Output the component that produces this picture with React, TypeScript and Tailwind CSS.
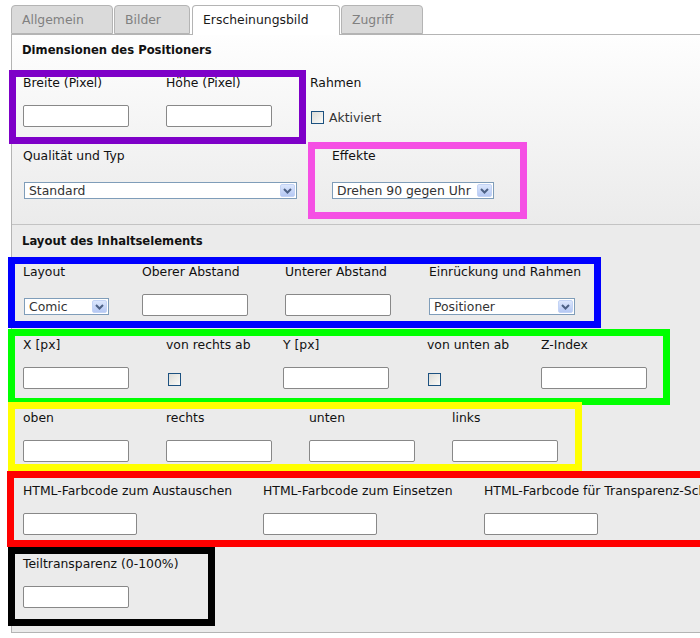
import React from "react";

function Label({ children }: { children: React.ReactNode }) {
  return <div className="h-[15px] whitespace-nowrap leading-[15px] text-[#111]">{children}</div>;
}

function TextInput({ className }: { className: string }) {
  return <div className={"h-[22px] rounded-[2px] border border-[#888] bg-white " + className} />;
}

function Select({ className, value }: { className: string; value: string }) {
  return (
    <div
      className={
        "mt-[4px] flex h-[17px] items-center justify-between border border-[#7f9db9] bg-white pl-[4px] pr-[1px] text-[#333] " +
        className
      }
    >
      <span className="leading-[15px] whitespace-nowrap">{value}</span>
      <span className="flex h-[13px] w-[15px] items-center justify-center rounded-[2px] border border-[#c3d3f5] bg-linear-to-b from-[#dce7fd] to-[#b5c8f3]">
        <svg width="9" height="6" viewBox="0 0 9 6">
          <path d="M1 1 L4.5 4.5 L8 1" fill="none" stroke="#4d6185" strokeWidth="2" />
        </svg>
      </span>
    </div>
  );
}

function Checkbox({ className }: { className: string }) {
  return (
    <div
      className={
        "h-[13px] w-[13px] border border-[#1c5180] bg-linear-to-br from-[#dcdcd7] to-[#fbfbf9] " + className
      }
    />
  );
}

function Field({
  className,
  label,
  children,
}: {
  className: string;
  label: string;
  children: React.ReactNode;
}) {
  return (
    <div className={"flex shrink-0 flex-col " + className}>
      <Label>{label}</Label>
      <div className="mt-[15px] h-[22px]">{children}</div>
    </div>
  );
}

function Tab({ label, active, className }: { label: string; active?: boolean; className: string }) {
  return (
    <div
      className={
        "relative flex shrink-0 items-start rounded-t-[4px] border border-[#b4b4b4] px-[10px] pt-[6px] leading-[15px] " +
        (active ? "z-10 -mb-[1px] h-[30px] border-b-0 bg-white text-[#1a1a1a] " : "h-[29px] bg-[#dadada] text-[#808080] ") +
        className
      }
    >
      {label}
    </div>
  );
}

export default function App() {
  return (
    <div className="relative h-[638px] w-[700px] overflow-hidden bg-white font-['DejaVu_Sans',sans-serif] text-[12.4px]">
      {/* Tabs */}
      <div className="flex items-end pl-[11px] pt-[5px]">
        <Tab label="Allgemein" className="w-[102px]" />
        <Tab label="Bilder" className="ml-[1px] w-[76px]" />
        <Tab label="Erscheinungsbild" active className="ml-[2px] w-[148px]" />
        <Tab label="Zugriff" className="ml-[1px] w-[82px]" />
      </div>

      {/* Panel */}
      <div className="ml-[11px] w-[700px] border-b border-l border-t border-[#b4b4b4]">
        {/* Section 1 */}
        <div className="border-b border-[#c3c3c3] bg-linear-to-b from-[#fefefe] to-[#ebebeb] pb-[24px] pl-[11px] pt-[8px]">
          <div className="-ml-[1px] h-[15px] text-[11.6px] font-bold leading-[15px] text-[#111]">Dimensionen des Positioners</div>
          <div className="mt-[17px] flex">
            <Field className="w-[143px]" label="Breite (Pixel)">
              <TextInput className="w-[106px]" />
            </Field>
            <Field className="w-[144px]" label="Höhe (Pixel)">
              <TextInput className="w-[106px]" />
            </Field>
            <Field className="w-[150px]" label="Rahmen">
              <div className="ml-[1px] mt-[6px] flex items-center">
                <Checkbox className="" />
                <span className="ml-[5px] leading-[13px] text-[#333]">Aktiviert</span>
              </div>
            </Field>
          </div>
          <div className="mt-[21px] flex">
            <Field className="w-[309px]" label="Qualität und Typ">
              <Select className="ml-[1px] w-[273px]" value="Standard" />
            </Field>
            <Field className="w-[200px]" label="Effekte">
              <Select className="w-[162px]" value="Drehen 90 gegen Uhr" />
            </Field>
          </div>
        </div>

        {/* Section 2 */}
        <div className="bg-[#ebebeb] pb-[24px] pl-[11px] pt-[9px]">
          <div className="-ml-[1px] h-[15px] text-[11.6px] font-bold leading-[15px] text-[#111]">Layout des Inhaltselements</div>
          <div className="mt-[15px] flex">
            <Field className="w-[119px]" label="Layout">
              <Select className="ml-[1px] w-[85px]" value="Comic" />
            </Field>
            <Field className="w-[143px]" label="Oberer Abstand">
              <TextInput className="w-[106px]" />
            </Field>
            <Field className="w-[144px]" label="Unterer Abstand">
              <TextInput className="w-[106px]" />
            </Field>
            <Field className="w-[160px]" label="Einrückung und Rahmen">
              <Select className="w-[146px]" value="Positioner" />
            </Field>
          </div>
          <div className="mt-[21px] flex">
            <Field className="w-[143px]" label="X [px]">
              <TextInput className="w-[106px]" />
            </Field>
            <Field className="w-[117px]" label="von rechts ab">
              <Checkbox className="ml-[2px] mt-[6px]" />
            </Field>
            <Field className="w-[144px]" label="Y [px]">
              <TextInput className="w-[106px]" />
            </Field>
            <Field className="w-[114px]" label="von unten ab">
              <Checkbox className="ml-[1px] mt-[6px]" />
            </Field>
            <Field className="w-[120px]" label="Z-Index">
              <TextInput className="w-[106px]" />
            </Field>
          </div>
          <div className="mt-[21px] flex">
            <Field className="w-[143px]" label="oben">
              <TextInput className="w-[106px]" />
            </Field>
            <Field className="w-[143px]" label="rechts">
              <TextInput className="w-[106px]" />
            </Field>
            <Field className="w-[143px]" label="unten">
              <TextInput className="w-[106px]" />
            </Field>
            <Field className="w-[143px]" label="links">
              <TextInput className="w-[106px]" />
            </Field>
          </div>
          <div className="mt-[21px] flex">
            <Field className="w-[240px]" label="HTML-Farbcode zum Austauschen">
              <TextInput className="w-[114px]" />
            </Field>
            <Field className="w-[221px]" label="HTML-Farbcode zum Einsetzen">
              <TextInput className="w-[114px]" />
            </Field>
            <Field className="w-[300px]" label="HTML-Farbcode für Transparenz-Schwellwert">
              <TextInput className="w-[114px]" />
            </Field>
          </div>
          <div className="mt-[21px] flex">
            <Field className="w-[143px]" label="Teiltransparenz (0-100%)">
              <TextInput className="w-[106px]" />
            </Field>
          </div>
        </div>
      </div>

      {/* Annotation overlays */}
      <div className="pointer-events-none absolute left-[9px] top-[70px] h-[74px] w-[297px] border-[7px] border-[#7e00c8]" />
      <div className="pointer-events-none absolute left-[308px] top-[142px] h-[77px] w-[219px] border-[7px] border-[#f550e4]" />
      <div className="pointer-events-none absolute left-[8px] top-[257px] h-[71px] w-[593px] border-[7px] border-[#0000ff]" />
      <div className="pointer-events-none absolute left-[8px] top-[329px] h-[76px] w-[662px] border-[7px] border-[#00ff00]" />
      <div className="pointer-events-none absolute left-[8px] top-[402px] h-[69px] w-[574px] border-[7px] border-[#ffff00]" />
      <div className="pointer-events-none absolute left-[7px] top-[471px] h-[76px] w-[720px] border-[7px] border-[#ff0000]" />
      <div className="pointer-events-none absolute left-[8px] top-[547px] h-[79px] w-[207px] border-[7px] border-[#000000]" />
    </div>
  );
}
